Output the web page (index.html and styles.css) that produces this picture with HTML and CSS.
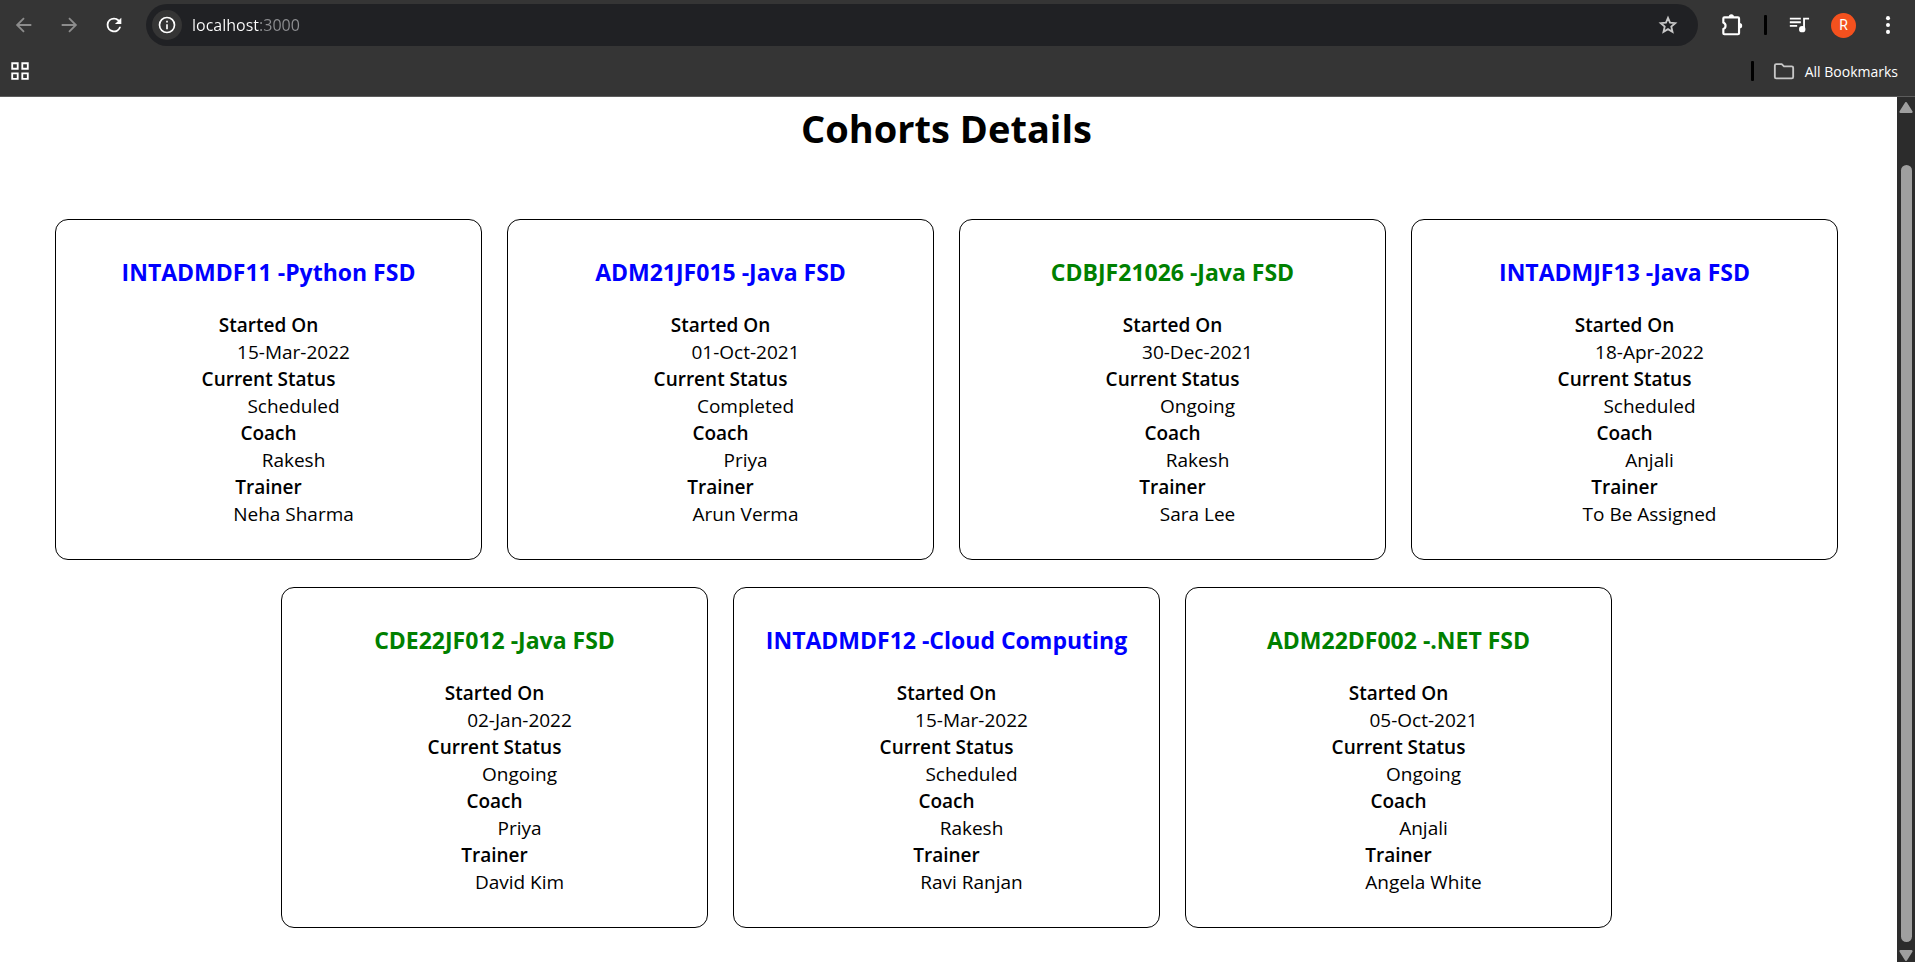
FILE: index.html
```html
<!DOCTYPE html>
<html lang="en">
<head>
<meta charset="utf-8">
<meta name="viewport" content="width=device-width, initial-scale=1">
<title>Cohorts Details</title>
<link rel="stylesheet" href="styles.css">
</head>
<body>
<header class="browser">
  <div class="toolbar">
    <nav class="nav-buttons" aria-label="Navigation">
      <button class="icon-button muted" aria-label="Back"><svg viewBox="0 0 24 24"><path d="M20 12H5M12 4.500L4.500 12l7.500 7.500"/></svg></button>
      <button class="icon-button muted" aria-label="Forward"><svg viewBox="0 0 24 24"><path d="M4 12h15M12 4.500l7.500 7.500-7.500 7.500"/></svg></button>
      <button class="icon-button" aria-label="Reload"><svg viewBox="0 0 24 24" class="solid"><path d="M17.650 6.350A7.950 7.950 0 0 0 12 4a8 8 0 1 0 7.730 10h-2.080A6 6 0 1 1 12 6c1.660 0 3.140.69 4.220 1.780L13 11h7V4z"/></svg></button>
    </nav>
    <div class="address">
      <button class="site-info" aria-label="View site information"><svg viewBox="0 0 24 24"><circle cx="12" cy="12" r="9"/><path d="M12 11v6M12 7v2"/></svg></button>
      <input class="url" type="text" aria-label="Address" value="localhost:3000">
      <button class="icon-button star" aria-label="Bookmark this page"><svg viewBox="0 0 24 24"><path d="M12 4.200l2.200 5.300 5.700.5-4.300 3.800 1.300 5.700L12 16.500l-4.900 3 1.300-5.700L4.100 10l5.700-.5z"/></svg></button>
    </div>
    <div class="actions">
      <button class="icon-button" aria-label="Extensions"><svg viewBox="0 0 24 24" class="large"><path d="M5 5h12.500a1 1 0 0 1 1 1v13.500a1 1 0 0 1-1 1H5a1 1 0 0 1-1-1v-3.700a3.300 3.300 0 0 0 0-6.100V6a1 1 0 0 1 1-1z"/><path class="knob" d="M9 4.500a2.400 2.400 0 0 1 4.800 0zM19 10.200a2.400 2.400 0 0 1 0 4.800z"/></svg></button>
      <span class="divider"></span>
      <button class="icon-button" aria-label="Media controls"><svg viewBox="0 0 24 24"><path d="M2 5h12M2 9h12M2 13h8M17.500 17V5H23"/><circle class="fill" cx="15.500" cy="16.500" r="2.500"/></svg></button>
      <button class="avatar" aria-label="Profile">R</button>
      <button class="icon-button" aria-label="Menu"><svg viewBox="0 0 24 24" class="solid"><circle cx="12" cy="4.500" r="2.200"/><circle cx="12" cy="12" r="2.200"/><circle cx="12" cy="19.500" r="2.200"/></svg></button>
    </div>
  </div>
  <div class="bookmarks">
    <button class="icon-button" aria-label="Apps"><svg viewBox="0 0 24 24"><path d="M3.500 3.500h6v6h-6zM14.500 3.500h6v6h-6zM3.500 14.500h6v6h-6zM14.500 14.500h6v6h-6z"/></svg></button>
    <span class="divider"></span>
    <button class="all-bookmarks"><svg viewBox="0 0 24 24"><path d="M3.500 4.500h6l2.500 2.500h8.500a1.500 1.500 0 0 1 1.500 1.500v10a1.500 1.500 0 0 1-1.500 1.500h-17A1.500 1.500 0 0 1 2 18.500V6a1.500 1.500 0 0 1 1.500-1.500z"/></svg>All Bookmarks</button>
  </div>
</header>
<div class="viewport">
  <main class="page">
    <h1 class="title">Cohorts Details</h1>
    <div class="cohorts">
      <article class="card">
        <h3 class="name planned">INTADMDF11 -Python FSD</h3>
        <dl class="details"><dt>Started On</dt><dd>15-Mar-2022</dd><dt>Current Status</dt><dd>Scheduled</dd><dt>Coach</dt><dd>Rakesh</dd><dt>Trainer</dt><dd>Neha Sharma</dd></dl>
      </article>
      <article class="card">
        <h3 class="name planned">ADM21JF015 -Java FSD</h3>
        <dl class="details"><dt>Started On</dt><dd>01-Oct-2021</dd><dt>Current Status</dt><dd>Completed</dd><dt>Coach</dt><dd>Priya</dd><dt>Trainer</dt><dd>Arun Verma</dd></dl>
      </article>
      <article class="card">
        <h3 class="name ongoing">CDBJF21026 -Java FSD</h3>
        <dl class="details"><dt>Started On</dt><dd>30-Dec-2021</dd><dt>Current Status</dt><dd>Ongoing</dd><dt>Coach</dt><dd>Rakesh</dd><dt>Trainer</dt><dd>Sara Lee</dd></dl>
      </article>
      <article class="card">
        <h3 class="name planned">INTADMJF13 -Java FSD</h3>
        <dl class="details"><dt>Started On</dt><dd>18-Apr-2022</dd><dt>Current Status</dt><dd>Scheduled</dd><dt>Coach</dt><dd>Anjali</dd><dt>Trainer</dt><dd>To Be Assigned</dd></dl>
      </article>
      <article class="card">
        <h3 class="name ongoing">CDE22JF012 -Java FSD</h3>
        <dl class="details"><dt>Started On</dt><dd>02-Jan-2022</dd><dt>Current Status</dt><dd>Ongoing</dd><dt>Coach</dt><dd>Priya</dd><dt>Trainer</dt><dd>David Kim</dd></dl>
      </article>
      <article class="card">
        <h3 class="name planned">INTADMDF12 -Cloud Computing</h3>
        <dl class="details"><dt>Started On</dt><dd>15-Mar-2022</dd><dt>Current Status</dt><dd>Scheduled</dd><dt>Coach</dt><dd>Rakesh</dd><dt>Trainer</dt><dd>Ravi Ranjan</dd></dl>
      </article>
      <article class="card">
        <h3 class="name ongoing">ADM22DF002 -.NET FSD</h3>
        <dl class="details"><dt>Started On</dt><dd>05-Oct-2021</dd><dt>Current Status</dt><dd>Ongoing</dd><dt>Coach</dt><dd>Anjali</dd><dt>Trainer</dt><dd>Angela White</dd></dl>
      </article>
    </div>
  </main>
  <div class="scrollbar" aria-hidden="true">
    <svg viewBox="0 0 12 10"><path d="M6 1l5 8H1z"/></svg>
    <div class="track"><div class="thumb"></div></div>
    <svg viewBox="0 0 12 10"><path d="M6 9l5-8H1z"/></svg>
  </div>
</div>
</body>
</html>
```
FILE: styles.css
```css
* {
  box-sizing: border-box;
}

body {
  display: flex;
  flex-direction: column;
  height: 100vh;
  margin: 0;
  overflow: hidden;
  background: #fff;
  color: #000;
  font-family: "Segoe UI", "Open Sans", "Noto Sans", sans-serif;
}

button {
  padding: 0;
  border: 0;
  background: none;
  color: inherit;
  font: inherit;
}

svg {
  display: block;
  fill: none;
  stroke: currentColor;
  stroke-width: 2;
}

.solid,
.knob,
.fill {
  fill: currentColor;
}

.solid,
.knob {
  stroke: none;
}

/* Browser chrome */

.browser {
  flex: none;
  border-bottom: 1px solid #5c5c5c;
  background: #353535;
  color: #fff;
}

.toolbar {
  display: flex;
  align-items: center;
  padding: 4px 12px 4px 9px;
}

.nav-buttons {
  display: flex;
  gap: 15px;
}

.icon-button {
  display: grid;
  place-items: center;
  width: 30px;
  height: 30px;
}

.icon-button svg {
  width: 22px;
  height: 22px;
}

.icon-button .large {
  width: 26px;
  height: 26px;
}

.muted {
  color: #8c8c8c;
}

.address {
  display: flex;
  flex: 1;
  align-items: center;
  height: 42px;
  margin: 0 19px 0 17px;
  padding: 0 15px 0 6px;
  border-radius: 21px;
  background: #202124;
}

.site-info {
  display: grid;
  place-items: center;
  width: 30px;
  height: 30px;
  border-radius: 50%;
  background: #353535;
}

.site-info svg {
  width: 20px;
  height: 20px;
}

.url {
  flex: 1;
  min-width: 0;
  margin-left: 10px;
  padding: 0;
  border: 0;
  outline: 0;
  background: linear-gradient(to right, #fff 67px, #8e8f92 67px);
  background-clip: text;
  color: transparent;
  font: inherit;
  font-size: 16px;
}

.star {
  color: #c7c7c7;
}

.actions {
  display: flex;
  align-items: center;
  gap: 17px;
}

.divider {
  width: 3px;
  height: 20px;
  border-radius: 1px;
  background: #000;
}

.avatar {
  width: 25px;
  height: 25px;
  border-radius: 50%;
  background: #f4511e;
  font-family: Roboto, sans-serif;
  font-size: 14px;
}

.bookmarks {
  display: flex;
  align-items: center;
  gap: 18px;
  padding: 4px 17px 8px 5px;
}

.bookmarks .divider {
  margin-left: auto;
}

.all-bookmarks {
  display: flex;
  align-items: center;
  gap: 9px;
  height: 34px;
  font-size: 14px;
}

.all-bookmarks svg {
  width: 24px;
  height: 22px;
  color: #c7c7c7;
}

/* Page */

.viewport {
  display: flex;
  flex: 1;
  min-height: 0;
}

.page {
  flex: 1;
  padding: 5px 24px 24px 20px;
  overflow: hidden;
}

.title {
  margin: 0 0 65px;
  font-size: 38px;
  line-height: 52px;
  text-align: center;
}

.cohorts {
  display: flex;
  flex-wrap: wrap;
  justify-content: center;
  gap: 27px 25px;
}

.card {
  width: 427px;
  padding: 37px 12px 31px;
  border: 1px solid #000;
  border-radius: 13px;
  text-align: center;
}

.name {
  margin: 0 0 25px;
  font-size: 23px;
  line-height: 30px;
}

.planned {
  color: #00f;
}

.ongoing {
  color: #008000;
}

.details {
  margin: 0;
  font-size: 19px;
  line-height: 27px;
}

.details dt {
  font-weight: 600;
}

.details dd {
  margin: 0 0 0 50px;
}

/* Scrollbar */

.scrollbar {
  display: flex;
  flex-direction: column;
  align-items: center;
  gap: 8px;
  width: 18px;
  padding: 5px 0 1px;
  background: #2c2c2c;
  color: #9f9f9f;
}

.scrollbar svg {
  flex: none;
  width: 14px;
  height: 11px;
  fill: currentColor;
  stroke-linejoin: round;
}

.track {
  flex: 1;
  width: 11px;
  padding-top: 44px;
}

.thumb {
  height: 100%;
  border-radius: 6px;
  background: #9f9f9f;
}
```
